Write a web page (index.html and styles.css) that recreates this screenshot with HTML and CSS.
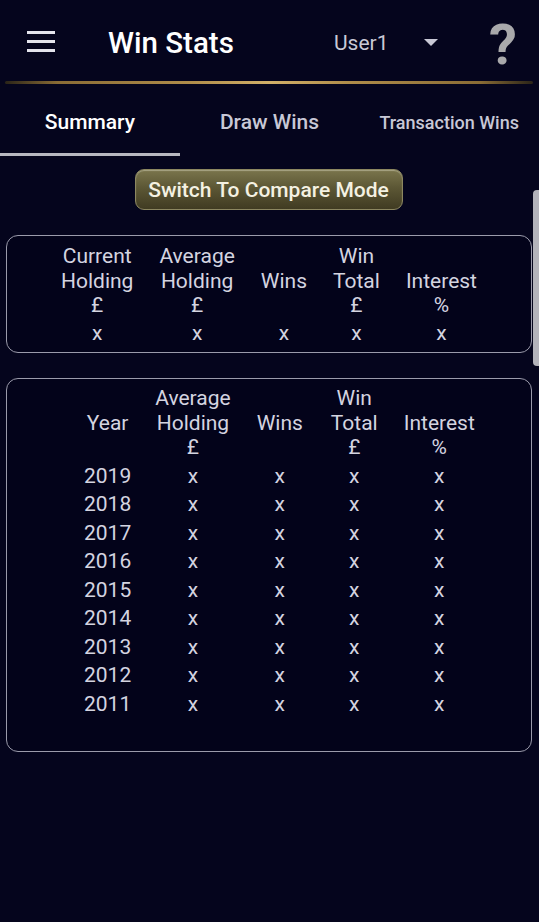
FILE: index.html
```html
<!DOCTYPE html>
<html>
<head>
<meta charset="utf-8">
<link rel="stylesheet" href="styles.css">
</head>
<body>
<header class="topbar">
  <div class="hamburger"><span></span><span></span><span></span></div>
  <h1 class="title">Win Stats</h1>
  <div class="user">User1</div>
  <div class="caret"></div>
  <div class="help">?</div>
</header>
<div class="goldline"></div>
<nav class="tabs">
  <div class="tab active">Summary</div>
  <div class="tab">Draw Wins</div>
  <div class="tab small">Transaction Wins</div>
</nav>
<div class="btnrow"><button class="compare">Switch To Compare Mode</button></div>

<section class="card card1">
  <table class="stats">
    <thead>
      <tr><th>Current<br>Holding<br>£</th><th>Average<br>Holding<br>£</th><th>&nbsp;<br>Wins<br>&nbsp;</th><th>Win<br>Total<br>£</th><th>&nbsp;<br>Interest<br>%</th></tr>
    </thead>
    <tbody>
      <tr><td>x</td><td>x</td><td>x</td><td>x</td><td>x</td></tr>
    </tbody>
  </table>
</section>

<section class="card card2">
  <table class="stats years">
    <thead>
      <tr><th>&nbsp;<br>Year<br>&nbsp;</th><th>Average<br>Holding<br>£</th><th>&nbsp;<br>Wins<br>&nbsp;</th><th>Win<br>Total<br>£</th><th>&nbsp;<br>Interest<br>%</th></tr>
    </thead>
    <tbody>
      <tr><td>2019</td><td>x</td><td>x</td><td>x</td><td>x</td></tr>
      <tr><td>2018</td><td>x</td><td>x</td><td>x</td><td>x</td></tr>
      <tr><td>2017</td><td>x</td><td>x</td><td>x</td><td>x</td></tr>
      <tr><td>2016</td><td>x</td><td>x</td><td>x</td><td>x</td></tr>
      <tr><td>2015</td><td>x</td><td>x</td><td>x</td><td>x</td></tr>
      <tr><td>2014</td><td>x</td><td>x</td><td>x</td><td>x</td></tr>
      <tr><td>2013</td><td>x</td><td>x</td><td>x</td><td>x</td></tr>
      <tr><td>2012</td><td>x</td><td>x</td><td>x</td><td>x</td></tr>
      <tr><td>2011</td><td>x</td><td>x</td><td>x</td><td>x</td></tr>
    </tbody>
  </table>
</section>

<div class="scrollthumb"></div>
</body>
</html>
```
FILE: styles.css
```css
html, body {
  margin: 0;
  padding: 0;
}
body {
  background: #05051d;
  color: #d4d4e0;
  font-family: Roboto, "Liberation Sans", sans-serif;
  height: 922px;
  overflow: hidden;
  position: relative;
}
.topbar {
  height: 81px;
  box-sizing: border-box;
  padding-top: 4px;
  display: flex;
  align-items: center;
}
.hamburger {
  margin-left: 27px;
  width: 28px;
  flex: none;
  display: flex;
  flex-direction: column;
  gap: 6px;
  margin-top: -2px;
}
.hamburger span {
  display: block;
  height: 3px;
  background: #e4e4ec;
}
.title {
  margin: 0 0 0 53px;
  font-size: 29.5px;
  font-weight: 500;
  color: #ffffff;
  width: 226px;
  flex: none;
}
.user {
  font-size: 21px;
  color: #c9c9d6;
  width: 90px;
  flex: none;
}
.caret {
  flex: none;
  width: 0;
  height: 0;
  border-left: 7px solid transparent;
  border-right: 7px solid transparent;
  border-top: 7px solid #c9c9d6;
  margin-top: -1px;
}
.help {
  flex: none;
  margin-left: 51px;
  font-size: 56px;
  font-weight: 700;
  color: #a9a9ab;
  line-height: 1;
  margin-top: 4px;
}
.goldline {
  height: 3px;
  margin: 0 6px 0 5px;
  background: linear-gradient(to right, #2a2418 0%, #8a6c35 10%, #b08d4a 35%, #d2b068 50%, #b08d4a 65%, #8a6c35 90%, #2a2418 100%);
  border-radius: 2px;
}
.tabs {
  display: flex;
  height: 72px;
}
.tab {
  flex: 1;
  display: flex;
  align-items: center;
  justify-content: center;
  font-size: 21px;
  font-weight: 500;
  color: #c8c8d6;
  border-bottom: 3px solid transparent;
  padding-top: 7px;
}
.tab.active {
  color: #ffffff;
  border-bottom-color: #b8b8c0;
}
.tab.small {
  font-size: 18px;
}
.btnrow {
  display: flex;
  justify-content: center;
  padding-top: 13px;
  padding-right: 2px;
}
.compare {
  height: 41px;
  width: 268px;
  border-radius: 9px;
  border: 1px solid #8c8760;
  background: linear-gradient(to bottom, #7a754c 0%, #5c5735 45%, #403b22 100%);
  box-shadow: inset 0 1px 1px rgba(255,255,240,0.35);
  color: #f4f1e2;
  font-family: Roboto, "Liberation Sans", sans-serif;
  font-size: 21px;
  font-weight: 500;
  padding: 0;
}
.card {
  margin: 0 7px 0 6px;
  border: 1.5px solid #9b9bab;
  border-radius: 12px;
  background: #03031a;
  box-sizing: border-box;
}
.card1 {
  margin-top: 25px;
  height: 118px;
  padding-top: 8px;
}
.card2 {
  margin-top: 25px;
  height: 374px;
  padding-top: 7px;
}
.stats {
  border-collapse: collapse;
  margin: 0 auto;
  font-size: 21px;
  color: #d4d4e0;
}
.stats th {
  font-weight: 400;
  line-height: 24.5px;
  padding: 0 13px;
  vertical-align: bottom;
  text-align: center;
}
.card1 .stats td {
  line-height: 30px;
  padding: 0 13px;
  text-align: center;
}
.years {
  margin-left: 64px;
}
.years td {
  line-height: 28.5px;
  padding: 0 13px;
  text-align: center;
}
.years th:first-child,
.years td:first-child {
  padding-right: 11px;
}
.years th:nth-child(3),
.years td:nth-child(3) {
  padding-right: 15px;
}
.years tbody tr:first-child td {
  padding-top: 2px;
}
.scrollthumb {
  position: absolute;
  right: 0;
  top: 190px;
  width: 6px;
  height: 176px;
  background: #b3b3ba;
  border-radius: 4px 0 0 4px;
}
```
